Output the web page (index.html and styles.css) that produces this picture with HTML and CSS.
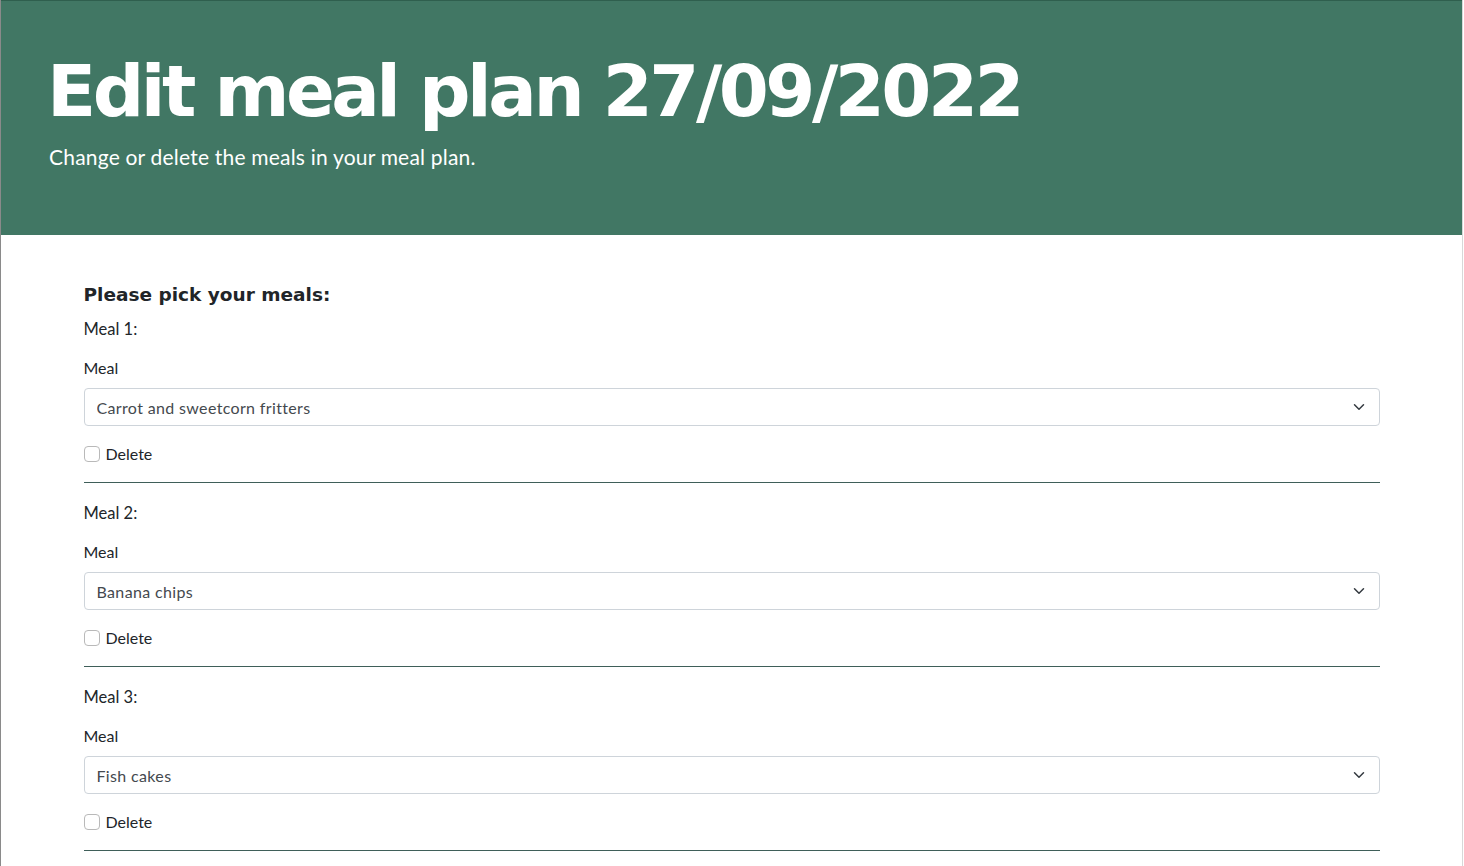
FILE: index.html
```html
<!DOCTYPE html>
<html lang="en">
<head>
<meta charset="utf-8">
<title>Edit meal plan</title>
<link rel="stylesheet" href="styles.css">
</head>
<body>
<div class="frame">
  <header class="hero">
    <h1 class="hero-title">Edit meal plan 27/09/2022</h1>
    <p class="hero-sub">Change or delete the meals in your meal plan.</p>
  </header>
  <main class="container">
    <h2 class="form-title">Please pick your meals:</h2>

    <section class="meal">
      <h3 class="meal-title">Meal 1:</h3>
      <label class="field-label" for="m1">Meal</label>
      <div class="select-wrap">
        <select id="m1" class="select"><option>Carrot and sweetcorn fritters</option></select>
        <svg class="chev" width="16" height="16" viewBox="0 0 16 16"><path d="M2 5l6 6 6-6" fill="none" stroke="#343a40" stroke-width="2" stroke-linecap="round" stroke-linejoin="round"/></svg>
      </div>
      <label class="check"><input type="checkbox" class="checkbox"> Delete</label>
    </section>

    <section class="meal">
      <h3 class="meal-title">Meal 2:</h3>
      <label class="field-label" for="m2">Meal</label>
      <div class="select-wrap">
        <select id="m2" class="select"><option>Banana chips</option></select>
        <svg class="chev" width="16" height="16" viewBox="0 0 16 16"><path d="M2 5l6 6 6-6" fill="none" stroke="#343a40" stroke-width="2" stroke-linecap="round" stroke-linejoin="round"/></svg>
      </div>
      <label class="check"><input type="checkbox" class="checkbox"> Delete</label>
    </section>

    <section class="meal">
      <h3 class="meal-title">Meal 3:</h3>
      <label class="field-label" for="m3">Meal</label>
      <div class="select-wrap">
        <select id="m3" class="select"><option>Fish cakes</option></select>
        <svg class="chev" width="16" height="16" viewBox="0 0 16 16"><path d="M2 5l6 6 6-6" fill="none" stroke="#343a40" stroke-width="2" stroke-linecap="round" stroke-linejoin="round"/></svg>
      </div>
      <label class="check"><input type="checkbox" class="checkbox"> Delete</label>
    </section>
  </main>
</div>
</body>
</html>
```
FILE: styles.css
```css
* { box-sizing: border-box; }
html, body { margin: 0; padding: 0; background: #fff; }
body { font-family: "Lato", "Open Sans", sans-serif; color: #212529; overflow: hidden; }
.frame {
  min-height: 866px;
  border-left: 1px solid #8a8a8a;
  border-right: 1px solid #d8d8d8;
  margin-right: 1px;
}
.hero {
  background: #417764;
  height: 235px;
  padding: 47px 0 0 46px;
  border-top: 1px solid #2f5f4e;
}
.hero-title {
  margin: 0;
  font-family: "DejaVu Sans", sans-serif;
  font-weight: 700;
  font-size: 72px;
  line-height: 1.2;
  color: #fff;
  letter-spacing: -3.5px;
}
.hero-sub {
  margin: 10px 0 0 2px;
  font-size: 21px;
  letter-spacing: 0.2px;
  color: #fff;
  font-weight: 400;
}
.container {
  width: 1296px;
  margin: 0 auto;
  padding-top: 48px;
}
.form-title {
  margin: 0 0 10px;
  font-family: "DejaVu Sans", sans-serif;
  font-weight: 700;
  font-size: 18.5px;
  line-height: 24px;
}
.meal {
  border-bottom: 1px solid #3f5f59;
  padding-bottom: 18px;
  margin-bottom: 18px;
}
.meal-title {
  margin: 0 0 15px;
  font-size: 16.5px;
  font-weight: 400;
  line-height: 24px;
}
.field-label {
  display: block;
  font-size: 16px;
  line-height: 24px;
  margin-bottom: 8px;
}
.select-wrap { position: relative; }
.select {
  display: block;
  width: 100%;
  height: 38px;
  padding: 0 36px 0 12px;
  font-family: inherit;
  font-size: 16px;
  letter-spacing: 0.35px;
  color: #44494e;
  background: #fff;
  border: 1px solid #ced4da;
  border-radius: 4px;
  appearance: none;
  -webkit-appearance: none;
}
.chev { position: absolute; right: 15px; top: 13px; width: 12px; height: 12px; }
.check {
  display: flex;
  align-items: center;
  gap: 6px;
  margin-top: 18px;
  font-size: 16px;
  line-height: 20px;
}
.checkbox {
  appearance: none;
  -webkit-appearance: none;
  margin: 0;
  width: 16px;
  height: 16px;
  border: 1px solid #b9b9b9;
  border-radius: 4px;
  background: #fff;
}
```
